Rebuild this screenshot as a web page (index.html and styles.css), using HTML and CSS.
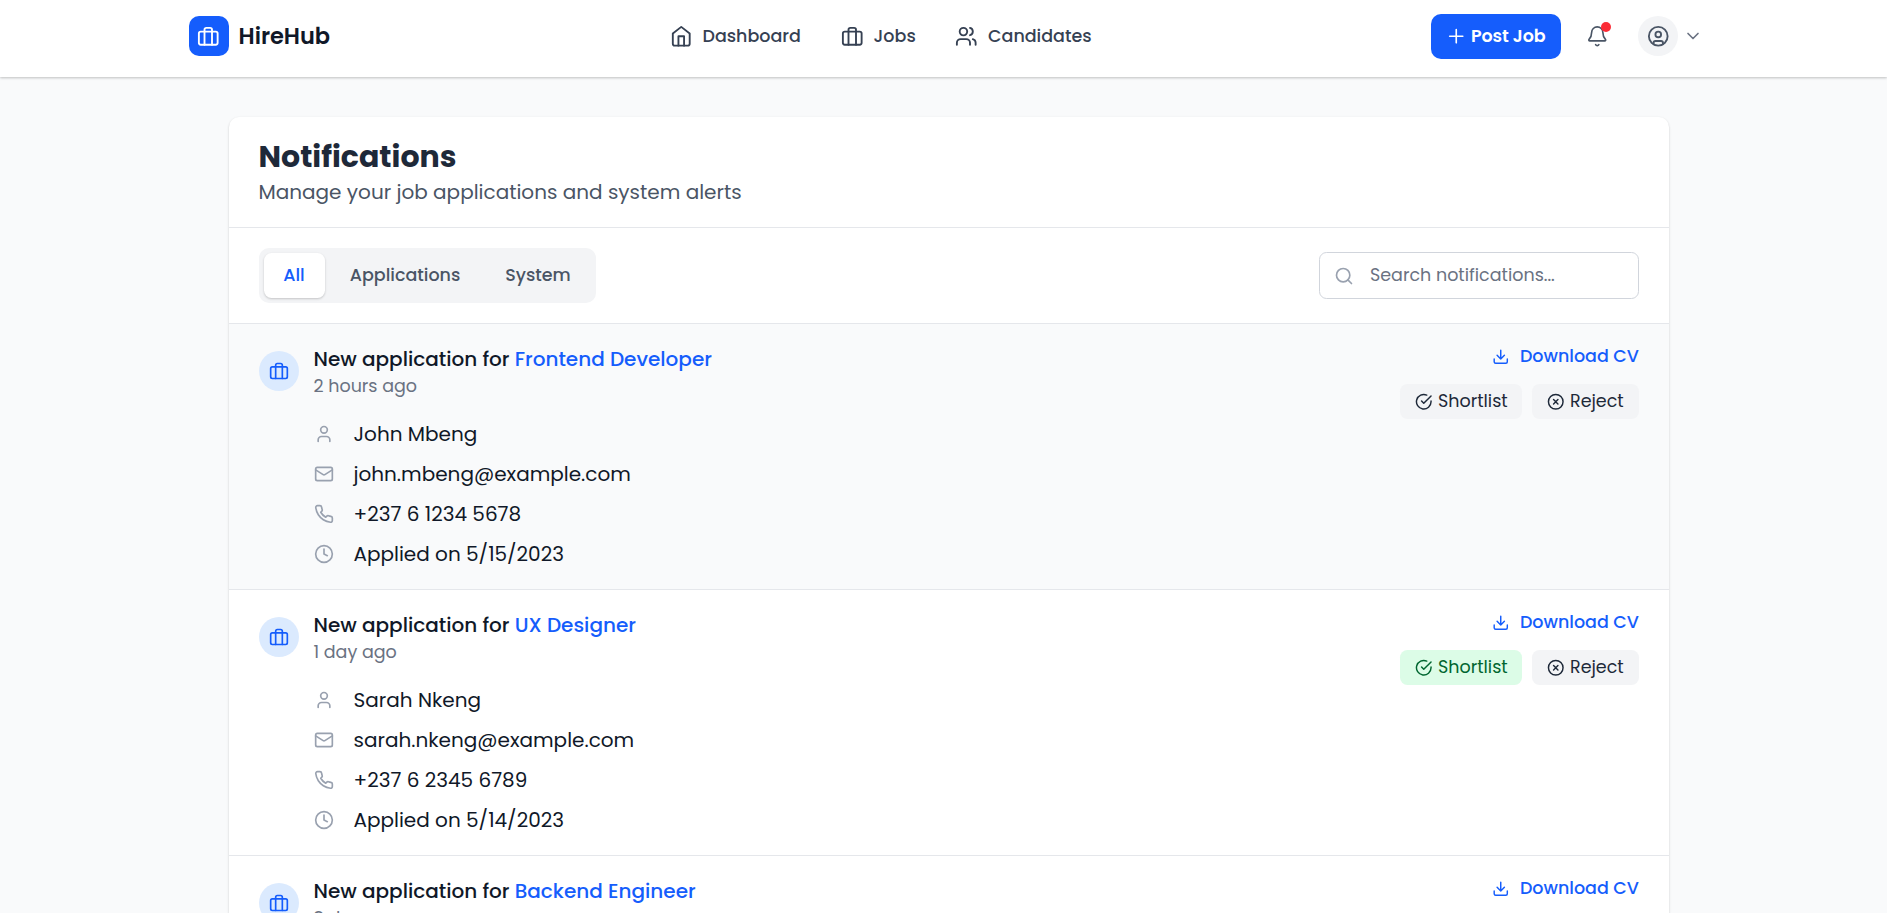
FILE: index.html
```
<!DOCTYPE html>
<html lang="en">
<head>
<meta charset="utf-8">
<title>HireHub – Notifications</title>
<link rel="stylesheet" href="styles.css">
</head>
<body>
<svg class="sprite" aria-hidden="true">
  <symbol id="briefcase" viewBox="0 0 24 24"><rect x="2" y="7" width="20" height="14" rx="2"/><path d="M16 21V5a2 2 0 0 0-2-2h-4a2 2 0 0 0-2 2v16"/></symbol>
  <symbol id="home" viewBox="0 0 24 24"><path d="m3 9 9-7 9 7v11a2 2 0 0 1-2 2H5a2 2 0 0 1-2-2z"/><path d="M9 22V12h6v10"/></symbol>
  <symbol id="users" viewBox="0 0 24 24"><path d="M16 21v-2a4 4 0 0 0-4-4H6a4 4 0 0 0-4 4v2"/><circle cx="9" cy="7" r="4"/><path d="M22 21v-2a4 4 0 0 0-3-3.87M16 3.13a4 4 0 0 1 0 7.75"/></symbol>
  <symbol id="plus" viewBox="0 0 24 24"><path d="M5 12h14M12 5v14"/></symbol>
  <symbol id="bell" viewBox="0 0 24 24"><path d="M10.268 21a2 2 0 0 0 3.464 0M3.262 15.326A1 1 0 0 0 4 17h16a1 1 0 0 0 .74-1.673C19.41 13.956 18 12.499 18 8A6 6 0 0 0 6 8c0 4.499-1.411 5.956-2.738 7.326"/></symbol>
  <symbol id="account" viewBox="0 0 24 24"><circle cx="12" cy="12" r="10"/><circle cx="12" cy="10" r="3"/><path d="M7 20.662V19a2 2 0 0 1 2-2h6a2 2 0 0 1 2 2v1.662"/></symbol>
  <symbol id="chevron" viewBox="0 0 24 24"><path d="m6 9 6 6 6-6"/></symbol>
  <symbol id="search" viewBox="0 0 24 24"><circle cx="11" cy="11" r="8"/><path d="m21 21-4.35-4.35"/></symbol>
  <symbol id="download" viewBox="0 0 24 24"><path d="M21 15v4a2 2 0 0 1-2 2H5a2 2 0 0 1-2-2v-4M7 10l5 5 5-5M12 15V3"/></symbol>
  <symbol id="check" viewBox="0 0 24 24"><path d="M22 11.08V12a10 10 0 1 1-5.93-9.14"/><path d="m9 11 3 3L22 4"/></symbol>
  <symbol id="cross" viewBox="0 0 24 24"><circle cx="12" cy="12" r="10"/><path d="m15 9-6 6M9 9l6 6"/></symbol>
  <symbol id="user" viewBox="0 0 24 24"><path d="M19 21v-2a4 4 0 0 0-4-4H9a4 4 0 0 0-4 4v2"/><circle cx="12" cy="7" r="4"/></symbol>
  <symbol id="mail" viewBox="0 0 24 24"><rect x="2" y="4" width="20" height="16" rx="2"/><path d="m22 7-8.97 5.7a1.94 1.94 0 0 1-2.06 0L2 7"/></symbol>
  <symbol id="phone" viewBox="0 0 24 24"><path d="M22 16.92v3a2 2 0 0 1-2.18 2 19.79 19.79 0 0 1-8.63-3.07 19.5 19.5 0 0 1-6-6 19.79 19.79 0 0 1-3.07-8.67A2 2 0 0 1 4.11 2h3a2 2 0 0 1 2 1.72 12.84 12.84 0 0 0 .7 2.81 2 2 0 0 1-.45 2.11L8.09 9.91a16 16 0 0 0 6 6l1.27-1.27a2 2 0 0 1 2.11-.45 12.84 12.84 0 0 0 2.81.7A2 2 0 0 1 22 16.92z"/></symbol>
  <symbol id="clock" viewBox="0 0 24 24"><circle cx="12" cy="12" r="10"/><path d="M12 6v6l4 2"/></symbol>
</svg>

<header class="topbar">
  <a class="brand"><span class="brand-mark"><svg class="icon"><use href="#briefcase"/></svg></span><span class="brand-name">HireHub</span></a>
  <nav class="nav">
    <a class="nav-link nav-dashboard"><svg class="icon"><use href="#home"/></svg><span>Dashboard</span></a>
    <a class="nav-link nav-jobs"><svg class="icon"><use href="#briefcase"/></svg><span>Jobs</span></a>
    <a class="nav-link nav-candidates"><svg class="icon"><use href="#users"/></svg><span>Candidates</span></a>
  </nav>
  <div class="actions">
    <button class="post"><svg class="icon"><use href="#plus"/></svg><span>Post Job</span></button>
    <span class="bell"><svg class="icon icon-thin"><use href="#bell"/></svg><i class="dot"></i></span>
    <span class="avatar"><svg class="icon"><use href="#account"/></svg></span>
    <svg class="icon icon-md chevron"><use href="#chevron"/></svg>
  </div>
</header>

<main class="card">
  <div class="card-head">
    <h1>Notifications</h1>
    <p>Manage your job applications and system alerts</p>
  </div>
  <div class="toolbar">
    <div class="tabs">
      <button class="tab tab-all active">All</button>
      <button class="tab tab-apps">Applications</button>
      <button class="tab tab-system">System</button>
    </div>
    <div class="search"><svg class="icon icon-md"><use href="#search"/></svg><span>Search notifications...</span></div>
  </div>

  <article class="item unread">
    <span class="badge"><svg class="icon icon-md"><use href="#briefcase"/></svg></span>
    <div class="body">
      <h2>New application for <a class="role">Frontend Developer</a></h2>
      <p class="time">2 hours ago</p>
      <ul class="details">
        <li><svg class="icon icon-md"><use href="#user"/></svg><span>John Mbeng</span></li>
        <li><svg class="icon icon-md"><use href="#mail"/></svg><span>john.mbeng@example.com</span></li>
        <li><svg class="icon icon-md"><use href="#phone"/></svg><span>+237 6 1234 5678</span></li>
        <li><svg class="icon icon-md"><use href="#clock"/></svg><span>Applied on 5/15/2023</span></li>
      </ul>
    </div>
    <div class="side">
      <a class="download"><svg class="icon icon-sm"><use href="#download"/></svg><span>Download CV</span></a>
      <div class="choices">
        <button class="choice shortlist"><svg class="icon icon-sm"><use href="#check"/></svg><span>Shortlist</span></button>
        <button class="choice reject"><svg class="icon icon-sm"><use href="#cross"/></svg><span>Reject</span></button>
      </div>
    </div>
  </article>

  <article class="item">
    <span class="badge"><svg class="icon icon-md"><use href="#briefcase"/></svg></span>
    <div class="body">
      <h2>New application for <a class="role">UX Designer</a></h2>
      <p class="time">1 day ago</p>
      <ul class="details">
        <li><svg class="icon icon-md"><use href="#user"/></svg><span>Sarah Nkeng</span></li>
        <li><svg class="icon icon-md"><use href="#mail"/></svg><span>sarah.nkeng@example.com</span></li>
        <li><svg class="icon icon-md"><use href="#phone"/></svg><span>+237 6 2345 6789</span></li>
        <li><svg class="icon icon-md"><use href="#clock"/></svg><span>Applied on 5/14/2023</span></li>
      </ul>
    </div>
    <div class="side">
      <a class="download"><svg class="icon icon-sm"><use href="#download"/></svg><span>Download CV</span></a>
      <div class="choices">
        <button class="choice shortlist chosen"><svg class="icon icon-sm"><use href="#check"/></svg><span>Shortlist</span></button>
        <button class="choice reject"><svg class="icon icon-sm"><use href="#cross"/></svg><span>Reject</span></button>
      </div>
    </div>
  </article>

  <article class="item">
    <span class="badge"><svg class="icon icon-md"><use href="#briefcase"/></svg></span>
    <div class="body">
      <h2>New application for <a class="role">Backend Engineer</a></h2>
      <p class="time">3 days ago</p>
    </div>
    <div class="side">
      <a class="download"><svg class="icon icon-sm"><use href="#download"/></svg><span>Download CV</span></a>
    </div>
  </article>
</main>
</body>
</html>
```
FILE: styles.css
```
* { box-sizing: border-box; margin: 0; padding: 0; }
html, body { height: 913px; overflow: hidden; }
body {
  display: flex; flex-direction: column;
  background: #f9fafb;
  color: #101828;
  font-family: Poppins, Inter, "Open Sans", sans-serif;
  font-size: 20px;
  white-space: nowrap;
}
button { border: 0; background: none; font: inherit; color: inherit; white-space: nowrap; }
ul { list-style: none; }
.sprite { display: none; }

.icon {
  display: block; flex: none; width: 22.5px; height: 22.5px;
  fill: none; stroke: currentColor; stroke-width: 2;
  stroke-linecap: round; stroke-linejoin: round;
}
.icon-md { width: 20px; height: 20px; }
.icon-sm { width: 17.5px; height: 17.5px; }
.icon-thin { stroke-width: 1.75; }

/* Top bar */
.topbar {
  display: flex; flex: none; align-items: center; justify-content: space-between;
  height: 77px; padding: 0 184px 5px 189px;
  background: #fff;
  box-shadow: 0 1px 3px rgba(0, 0, 0, .12), 0 1px 2px rgba(0, 0, 0, .12);
}
.brand { display: flex; align-items: center; gap: 9.5px; width: 480.5px; }
.brand-mark {
  display: flex; align-items: center; justify-content: center;
  width: 40px; height: 40px; padding-right: 1px; border-radius: 10px;
  background: #155dfc; color: #fff;
}
.brand-name { font-size: 22.5px; font-weight: 600; }
.nav { display: flex; flex: 1; }
.nav-link { display: flex; align-items: center; gap: 10.5px; color: #364153; font-size: 17.5px; font-weight: 500; }
.nav-dashboard { width: 171px; }
.nav-jobs { width: 114.5px; }
.actions { display: flex; align-items: center; }
.post {
  display: flex; align-items: center; gap: 3.5px;
  width: 130px; height: 45px; padding-left: 14px; border-radius: 10px;
  background: #155dfc; color: #fff; font-size: 17.5px; font-weight: 600; letter-spacing: -.1px;
}
.post .icon { stroke-width: 1.75; }
.bell { position: relative; margin-left: 25px; color: #4a5565; }
.dot {
  position: absolute; top: -3px; right: -2.5px;
  width: 10px; height: 10px; border-radius: 50%; background: #fb2c36;
}
.avatar {
  display: flex; align-items: center; justify-content: center;
  width: 40px; height: 40px; margin-left: 29.5px; border-radius: 50%;
  background: #f3f4f6; color: #4a5565;
}
.chevron { margin-left: 5px; color: #6a7282; }

/* Card */
.card {
  flex: 1; width: 1440.5px; min-height: 0; margin: 40px 0 0 228.5px;
  border-radius: 10px 10px 0 0; background: #fff; overflow: hidden;
  box-shadow: 0 1px 3px rgba(0, 0, 0, .1), 0 1px 2px rgba(0, 0, 0, .1);
}
.card-head { height: 111px; padding: 20px 30px; border-bottom: 1px solid #e5e7eb; }
.card-head h1 { color: #1e2939; font-size: 30px; font-weight: 700; line-height: 39px; }
.card-head p { color: #4a5565; line-height: 33px; }

.toolbar {
  display: flex; align-items: center; justify-content: space-between;
  height: 96px; padding: 0 30px; border-bottom: 1px solid #e5e7eb;
}
.tabs { display: flex; gap: 5px; padding: 5px; border-radius: 10px; background: #f3f4f6; }
.tab { height: 45px; padding-bottom: 2px; border-radius: 7.5px; color: #4a5565; font-size: 17.5px; font-weight: 500; }
.tab-all { width: 61px; }
.tab-apps { width: 151px; }
.tab-system { width: 105px; }
.tab.active { background: #fff; color: #155dfc; box-shadow: 0 1px 3px rgba(0, 0, 0, .1), 0 1px 2px rgba(0, 0, 0, .1); }
.search {
  display: flex; align-items: center; gap: 16px;
  width: 320px; height: 47px; padding-left: 14px;
  border: 1px solid #d1d5dc; border-radius: 7.5px;
  color: #6a7282; font-size: 17.5px;
}
.search .icon { color: #99a1af; }
.search span { padding-bottom: 2px; }

/* Notification rows */
.item { display: flex; align-items: flex-start; height: 266px; padding: 20px 30px; border-bottom: 1px solid #e5e7eb; }
.unread { background: #f9fafb; }
.badge {
  display: flex; align-items: center; justify-content: center;
  width: 40px; height: 40px; margin: 7px 15px 0 0; border-radius: 50%;
  background: #dbeafe; color: #155dfc;
}
.body { flex: 1; }
.body h2 { font-size: 20px; font-weight: 500; line-height: 31px; }
.role { color: #155dfc; }
.time { color: #6a7282; font-size: 17.5px; line-height: 22px; }
.details { display: grid; gap: 10px; margin-top: 22px; }
.details li { display: flex; align-items: center; gap: 20px; height: 30px; }
.details .icon { color: #99a1af; }

.side { display: flex; flex-direction: column; align-items: flex-end; gap: 16px; }
.download { display: flex; align-items: center; gap: 10px; height: 24px; color: #155dfc; font-size: 17.5px; font-weight: 500; }
.download .icon { margin-top: 1px; }
.choices { display: flex; gap: 10px; }
.choice {
  display: flex; align-items: center; gap: 5.5px; height: 35px; padding-left: 15px;
  border-radius: 7.5px; background: #f3f4f6; color: #1e2939; font-size: 17.5px;
}
.choice span { padding-bottom: 2px; }
.shortlist { width: 122px; }
.reject { width: 107px; }
.chosen { background: #dcfce7; color: #016630; }
```
